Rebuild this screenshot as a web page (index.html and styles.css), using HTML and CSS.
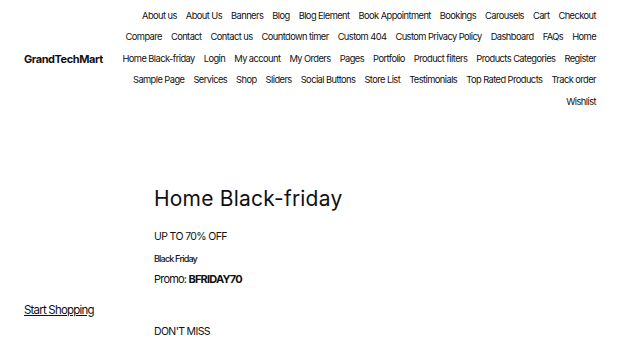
FILE: index.html
```html
<!DOCTYPE html>
<html>
<head>
    <meta name="viewport" content="width=device-width, initial-scale=1.0"/>
    <title>GrandTechMart</title>
    <link rel="stylesheet" href="styles.css">
</head>
<body>
    <header class="site_header">
        <a class="logo" href="#">GrandTechMart</a>
        <ul class="menu">
            <li><a href="#">About us</a></li>
            <li><a href="#">About Us</a></li>
            <li><a href="#">Banners</a></li>
            <li><a href="#">Blog</a></li>
            <li><a href="#">Blog Element</a></li>
            <li><a href="#">Book Appointment</a></li>
            <li><a href="#">Bookings</a></li>
            <li><a href="#">Carousels</a></li>
            <li><a href="#">Cart</a></li>
            <li><a href="#">Checkout</a></li>
            <li><a href="#">Compare</a></li>
            <li><a href="#">Contact</a></li>
            <li><a href="#">Contact us</a></li>
            <li><a href="#">Countdown timer</a></li>
            <li><a href="#">Custom 404</a></li>
            <li><a href="#">Custom Privacy Policy</a></li>
            <li><a href="#">Dashboard</a></li>
            <li><a href="#">FAQs</a></li>
            <li><a href="#">Home</a></li>
            <li><a href="#">Home Black-friday</a></li>
            <li><a href="#">Login</a></li>
            <li><a href="#">My account</a></li>
            <li><a href="#">My Orders</a></li>
            <li><a href="#">Pages</a></li>
            <li><a href="#">Portfolio</a></li>
            <li><a href="#">Product filters</a></li>
            <li><a href="#">Products Categories</a></li>
            <li><a href="#">Register</a></li>
            <li><a href="#">Sample Page</a></li>
            <li><a href="#">Services</a></li>
            <li><a href="#">Shop</a></li>
            <li><a href="#">Sliders</a></li>
            <li><a href="#">Social Buttons</a></li>
            <li><a href="#">Store List</a></li>
            <li><a href="#">Testimonials</a></li>
            <li><a href="#">Top Rated Products</a></li>
            <li><a href="#">Track order</a></li>
            <li><a href="#">Wishlist</a></li>
        </ul>
    </header>

    <main class="content">
        <div class="hero">
            <h1 class="hero_title">Home Black-friday</h1>
            <p class="hero_sub">UP TO 70% OFF</p>
            <p class="hero_tag">Black Friday</p>
            <p class="hero_promo">Promo: <strong>BFRIDAY70</strong></p>
        </div>
        <a class="shop_link" href="#">Start Shopping</a>
        <div class="hero">
            <p class="hero_sub">DON'T MISS</p>
        </div>
    </main>
</body>
</html>
```

FILE: styles.css
```css
body {
    margin: 0;
    font-family: Inter, "Noto Sans", sans-serif;
    color: #111;
    background-color: #fff;
    letter-spacing: -0.05em;
}
a {
    color: #111;
    text-decoration: none;
}
p {
    margin: 0;
}

.site_header {
    display: flex;
    align-items: center;
    justify-content: space-between;
    padding: 5px 24px 0 24px;
}
.logo {
    font-size: 11px;
    font-weight: 700;
    letter-spacing: -0.04em;
}
.menu {
    display: flex;
    flex-wrap: wrap;
    justify-content: flex-end;
    column-gap: 9px;
    width: 476px;
    margin: 0;
    padding: 0;
    list-style: none;
    font-size: 9.3px;
    letter-spacing: -0.06em;
    line-height: 21.4px;
}

.content {
    padding: 71px 24px 0 24px;
}
.hero {
    margin-left: 130px;
}
.hero_title {
    margin: 0 0 11px 0;
    font-size: 21px;
    font-weight: 400;
    letter-spacing: 0.01em;
    line-height: 32px;
}
.hero_sub {
    font-size: 10.5px;
    letter-spacing: -0.06em;
    line-height: 22px;
}
.hero_tag {
    font-size: 9px;
    font-weight: 500;
    line-height: 21px;
}
.hero_promo {
    font-size: 11px;
    line-height: 21px;
}
.hero_promo strong {
    font-weight: 700;
}
.shop_link {
    display: inline-block;
    margin: 13px 0 4px 0;
    font-size: 11.5px;
    text-decoration: underline;
}
```
